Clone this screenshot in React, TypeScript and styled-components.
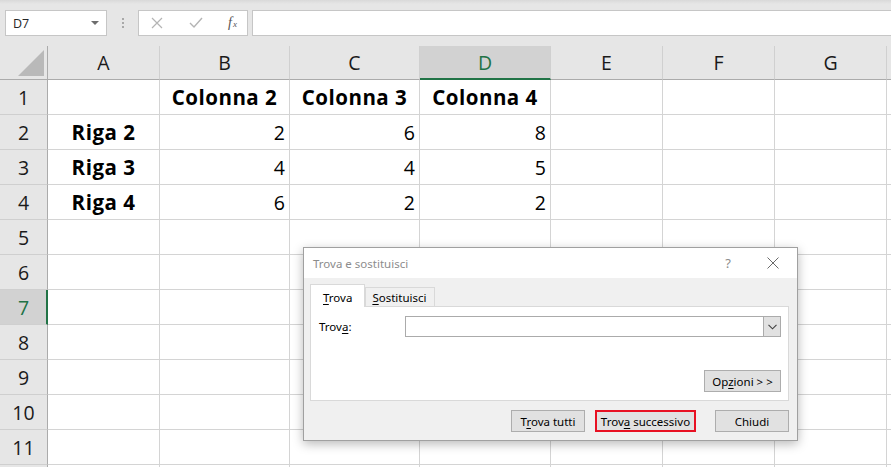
import { FC, ReactNode } from 'react'
import styled, { createGlobalStyle } from 'styled-components';

const GlobalStyle = createGlobalStyle`
    html, body {
        margin: 0;
        padding: 0;
        background: #ffffff;
        overflow: hidden;
    }
    * {
        box-sizing: border-box;
    }
`;

// Data
const COLUMNS = ['A', 'B', 'C', 'D', 'E', 'F', 'G'];
const ROWS: (string | number)[][] = [
    ['', 'Colonna 2', 'Colonna 3', 'Colonna 4'],
    ['Riga 2', 2, 6, 8],
    ['Riga 3', 4, 4, 5],
    ['Riga 4', 6, 2, 2],
];
const ROW_COUNT = 11;
const ACTIVE_COL = 'D';
const ACTIVE_ROW = 7;

const App: FC = () => {
    return (
        <Page>
            <GlobalStyle />
            <FormulaBar>
                <NameBox>
                    <span>D7</span>
                    <DropArrow />
                </NameBox>
                <Grip>
                    <i /><i /><i />
                </Grip>
                <FxButtons>
                    <svg width="12" height="12" viewBox="0 0 12 12">
                        <path d="M1 1 L11 11 M11 1 L1 11" stroke="#b4b4b4" strokeWidth="1.2" fill="none" />
                    </svg>
                    <svg width="14" height="12" viewBox="0 0 14 12">
                        <path d="M1 6 L5 10 L13 1" stroke="#b4b4b4" strokeWidth="1.4" fill="none" />
                    </svg>
                    <Fx>f<sub>x</sub></Fx>
                </FxButtons>
                <FormulaInput />
            </FormulaBar>
            <Sheet>
                <Corner>
                    <SelectAll />
                </Corner>
                {COLUMNS.map((c) => (
                    <ColHeader key={c} $active={c === ACTIVE_COL}>{c}</ColHeader>
                ))}
                {/* next column, only a sliver is visible */}
                <ColHeader />
                {Array.from({ length: ROW_COUNT + 1 }).map((_, r) => (
                    <SheetRow key={r} index={r + 1} values={ROWS[r] || []} />
                ))}
            </Sheet>
            <FindDialog />
        </Page>
    )
}

const SheetRow: FC<{ index: number; values: (string | number)[] }> = ({ index, values }) => (
    <>
        <RowHeader $active={index === ACTIVE_ROW}>{index <= ROW_COUNT ? index : ''}</RowHeader>
        {[...COLUMNS, ''].map((c, i) => {
            const v = values[i];
            const numeric = typeof v === 'number';
            return (
                <Cell key={c || 'next'} $align={numeric ? 'right' : 'center'} $bold={!numeric}>
                    {v ?? ''}
                </Cell>
            );
        })}
    </>
);

const U: FC<{ children: ReactNode }> = ({ children }) => <Under>{children}</Under>;

const FindDialog: FC = () => (
    <Dialog>
        <TitleBar>
            <TitleText>Trova e sostituisci</TitleText>
            <TitleActions>
                <span>?</span>
                <svg width="12" height="12" viewBox="0 0 12 12">
                    <path d="M0.5 0.5 L11.5 11.5 M11.5 0.5 L0.5 11.5" stroke="#6a6a6a" strokeWidth="1" fill="none" />
                </svg>
            </TitleActions>
        </TitleBar>
        <DialogBody>
            <Tabs>
                <Tab $active><span><U>T</U>rova</span></Tab>
                <Tab><span><U>S</U>ostituisci</span></Tab>
            </Tabs>
            <TabPanel>
                <FieldRow>
                    <FieldLabel>Trov<U>a</U>:</FieldLabel>
                    <Combo>
                        <ComboInput />
                        <ComboButton>
                            <svg width="9" height="6" viewBox="0 0 9 6">
                                <path d="M0.5 0.8 L4.5 4.8 L8.5 0.8" stroke="#404040" strokeWidth="1.1" fill="none" />
                            </svg>
                        </ComboButton>
                    </Combo>
                </FieldRow>
                <PanelFooter>
                    <DlgButton $w={77}><span>Op<U>z</U>ioni &gt; &gt;</span></DlgButton>
                </PanelFooter>
            </TabPanel>
            <DialogFooter>
                <DlgButton $w={74}><span>T<U>r</U>ova tutti</span></DlgButton>
                <FocusRing>
                    <DlgButton $w={97} $plain><span>Trov<U>a</U> successivo</span></DlgButton>
                </FocusRing>
                <DlgButton $w={74} $gap={19}><span>Chiudi</span></DlgButton>
            </DialogFooter>
        </DialogBody>
    </Dialog>
);

const Page = styled.div`
    position: relative;
    width: 891px;
    height: 467px;
    overflow: hidden;
    background: #ffffff;
    font-family: "Open Sans", "Liberation Sans", sans-serif;
`;

/* ---------- formula bar ---------- */

const FormulaBar = styled.div`
    height: 46px;
    display: flex;
    align-items: flex-start;
    padding: 10px 0 0 5px;
    background: linear-gradient(#d9d9d9 0px, #e6e6e6 4px, #e6e6e6 100%);
`;

const NameBox = styled.div`
    width: 102px;
    height: 26px;
    background: #ffffff;
    border: 1px solid #c6c6c6;
    display: flex;
    align-items: center;
    justify-content: space-between;
    padding: 0 7px 0 7px;
    font-size: 12.5px;
    color: #262626;
`;

const DropArrow = styled.span`
    width: 0;
    height: 0;
    border-left: 4px solid transparent;
    border-right: 4px solid transparent;
    border-top: 4px solid #6d6d6d;
`;

const Grip = styled.div`
    width: 31px;
    height: 26px;
    display: flex;
    flex-direction: column;
    align-items: center;
    justify-content: center;
    gap: 2px;
    i {
        width: 2px;
        height: 2px;
        background: #a8a8a8;
    }
`;

const FxButtons = styled.div`
    width: 110px;
    height: 26px;
    background: #ffffff;
    border: 1px solid #c6c6c6;
    display: flex;
    align-items: center;
    justify-content: space-between;
    padding: 0 10px 0 12px;
`;

const Fx = styled.span`
    font-family: "Liberation Serif", serif;
    font-style: italic;
    font-size: 14px;
    color: #555555;
    sub {
        font-size: 9px;
        vertical-align: baseline;
        margin-left: 1px;
    }
`;

const FormulaInput = styled.div`
    flex: 1;
    height: 26px;
    margin-left: 4px;
    background: #ffffff;
    border: 1px solid #c6c6c6;
    border-right: none;
`;

/* ---------- sheet ---------- */

const Sheet = styled.div`
    display: grid;
    grid-template-columns: 48px 112px 130px 130px 131px 112px 112px 112px 112px;
    grid-template-rows: 34px;
    grid-auto-rows: 35px;
    font-family: "Open Sans", "Liberation Sans", sans-serif;
`;

const HeaderBase = styled.div<{ $active?: boolean }>`
    display: flex;
    align-items: center;
    justify-content: center;
    font-size: 19.5px;
    color: ${p => p.$active ? '#217346' : '#1a1a1a'};
    background: ${p => p.$active ? '#d2d2d2' : '#e6e6e6'};
`;

const Corner = styled(HeaderBase)`
    position: relative;
    border-right: 1px solid #ababab;
    border-bottom: 1px solid #ababab;
`;

const SelectAll = styled.span`
    position: absolute;
    right: 3px;
    bottom: 3px;
    width: 0;
    height: 0;
    border-left: 26px solid transparent;
    border-bottom: 26px solid #b9b9b9;
`;

const ColHeader = styled(HeaderBase)`
    border-right: 1px solid #d0d0d0;
    border-bottom: ${p => p.$active ? '2px solid #217346' : '1px solid #ababab'};
    padding-top: ${p => p.$active ? '1px' : '0'};
`;

const RowHeader = styled(HeaderBase)`
    border-right: ${p => p.$active ? '2px solid #217346' : '1px solid #ababab'};
    border-bottom: 1px solid #cfcfcf;
    padding-left: ${p => p.$active ? '1px' : '0'};
`;

const Cell = styled.div<{ $align: 'right' | 'center'; $bold?: boolean }>`
    display: flex;
    align-items: center;
    justify-content: ${p => p.$align === 'right' ? 'flex-end' : 'center'};
    padding: 0 4px;
    font-size: ${p => p.$bold ? '20.5px' : '19.5px'};
    letter-spacing: ${p => p.$bold ? '0.5px' : '0'};
    font-weight: ${p => p.$bold ? 700 : 400};
    color: #000000;
    white-space: nowrap;
    overflow: hidden;
    border-right: 1px solid #d4d4d4;
    border-bottom: 1px solid #d4d4d4;
`;

/* ---------- find dialog ---------- */

const Dialog = styled.div`
    position: absolute;
    left: 303px;
    top: 247px;
    width: 495px;
    height: 194px;
    display: flex;
    flex-direction: column;
    background: #f0f0f0;
    border: 1px solid #a0a0a0;
    box-shadow: 0 3px 10px rgba(0, 0, 0, 0.28);
    font-family: "Noto Sans", "Open Sans", sans-serif;
    font-size: 11.5px;
    color: #000000;
`;

const TitleBar = styled.div`
    height: 30px;
    flex: none;
    background: #ffffff;
    display: flex;
    align-items: center;
    justify-content: space-between;
    padding: 0 18px 0 9px;
`;

const TitleText = styled.span`
    color: #8c8c8c;
    font-size: 11.5px;
`;

const TitleActions = styled.div`
    display: flex;
    align-items: center;
    gap: 36px;
    color: #8c8c8c;
    font-size: 13px;
`;

const DialogBody = styled.div`
    flex: 1;
    display: flex;
    flex-direction: column;
    padding: 6px 8px 8px 6px;
`;

const Tabs = styled.div`
    display: flex;
    align-items: flex-end;
    height: 22px;
`;

const Tab = styled.div<{ $active?: boolean }>`
    height: ${p => p.$active ? '23px' : '19px'};
    padding: ${p => p.$active ? '2px 12px 0 12px' : '0 7px 0 6px'};
    display: flex;
    align-items: center;
    background: ${p => p.$active ? '#ffffff' : '#f0f0f0'};
    border: 1px solid #d9d9d9;
    border-bottom: none;
    margin-bottom: ${p => p.$active ? '-1px' : '0'};
    position: relative;
    z-index: ${p => p.$active ? 1 : 0};
`;

const Under = styled.span`
    text-decoration: underline;
    text-underline-offset: 2px;
`;

const TabPanel = styled.div`
    height: 95px;
    display: flex;
    flex-direction: column;
    justify-content: space-between;
    background: #ffffff;
    border: 1px solid #d9d9d9;
    padding: 9px 7px 8px 7px;
`;

const FieldRow = styled.div`
    display: flex;
    align-items: center;
`;

const FieldLabel = styled.span`
    width: 87px;
    padding-left: 1px;
`;

const Combo = styled.div`
    flex: 1;
    height: 21px;
    display: flex;
    border: 1px solid #ababab;
    background: #ffffff;
`;

const ComboInput = styled.div`
    flex: 1;
`;

const ComboButton = styled.div`
    width: 17px;
    display: flex;
    align-items: center;
    justify-content: center;
    background: #e1e1e1;
    border-left: 1px solid #ababab;
`;

const PanelFooter = styled.div`
    display: flex;
    justify-content: flex-end;
`;

const DlgButton = styled.div<{ $w: number; $plain?: boolean; $gap?: number }>`
    width: ${p => p.$w}px;
    height: ${p => p.$plain ? 18 : 22}px;
    margin-left: ${p => p.$gap ?? 0}px;
    display: flex;
    align-items: center;
    justify-content: center;
    background: #e1e1e1;
    border: ${p => p.$plain ? 'none' : '1px solid #adadad'};
    white-space: nowrap;
`;

const FocusRing = styled.div`
    margin-left: 10px;
    border: 2px solid #e81123;
    background: #e1e1e1;
    display: flex;
    height: 22px;
    width: 101px;
    align-items: center;
    justify-content: center;
`;

const DialogFooter = styled.div`
    display: flex;
    justify-content: flex-end;
    align-items: center;
    margin-top: 9px;
`;

export default App
